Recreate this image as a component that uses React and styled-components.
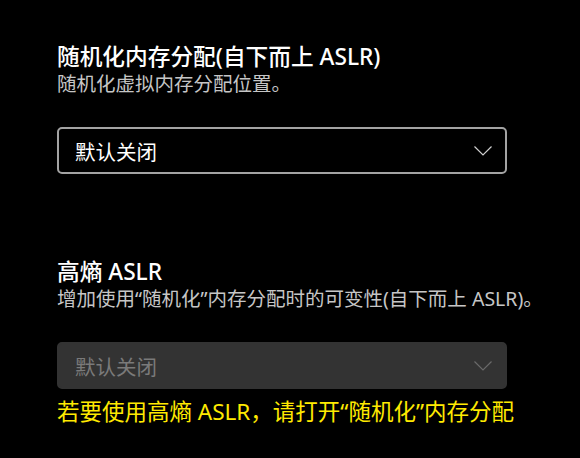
import React from "react";
import styled, { createGlobalStyle } from "styled-components";

const GlobalStyle = createGlobalStyle`
  html, body {
    margin: 0;
    padding: 0;
    background: #000;
  }
  body {
    font-family: "Noto Sans", "Noto Sans CJK SC", sans-serif;
    color: #fff;
  }
`;

const Page = styled.div`
  width: 580px;
  height: 458px;
  box-sizing: border-box;
  padding: 43px 0 0 57px;
  background: #000;
  overflow: hidden;
`;

const Section = styled.section`
  width: 450px;
  margin-bottom: ${(p) => p.gap || 0}px;
`;

const Title = styled.div`
  font-size: 22.7px;
  line-height: 28px;
  font-weight: 500;
  color: #fff;
  white-space: nowrap;
`;

const Desc = styled.div`
  font-size: 19.5px;
  line-height: 25px;
  color: #c6c6c6;
  white-space: nowrap;
`;

const Select = styled.div`
  margin-top: 31px;
  height: 47px;
  box-sizing: border-box;
  border-radius: 5px;
  display: flex;
  align-items: center;
  justify-content: space-between;
  padding: 0 13px 0 16px;
  font-size: 20.5px;
  border: 2px solid ${(p) => (p.disabled ? "#333333" : "#a3a3a3")};
  background: ${(p) => (p.disabled ? "#333333" : "#000")};
  color: ${(p) => (p.disabled ? "#7a7a7a" : "#fff")};
`;

const Warning = styled.div`
  margin-top: 8px;
  font-size: 22.5px;
  line-height: 30px;
  color: #ffea00;
  white-space: nowrap;
`;

function Chevron({ color }) {
  return (
    <svg width="18" height="10" viewBox="0 0 18 10" fill="none">
      <path d="M0.5 0.5 L9 9 L17.5 0.5" stroke={color} strokeWidth="1.2" />
    </svg>
  );
}

export default function App() {
  return (
    <>
      <GlobalStyle />
      <Page>
        <Section gap={84}>
          <Title>随机化内存分配(自下而上 ASLR)</Title>
          <Desc>随机化虚拟内存分配位置。</Desc>
          <Select>
            <span>默认关闭</span>
            <Chevron color="#cfcfcf" />
          </Select>
        </Section>
        <Section>
          <Title>高熵 ASLR</Title>
          <Desc>增加使用“随机化”内存分配时的可变性(自下而上 ASLR)。</Desc>
          <Select disabled>
            <span>默认关闭</span>
            <Chevron color="#6a6a6a" />
          </Select>
          <Warning>若要使用高熵 ASLR，请打开“随机化”内存分配</Warning>
        </Section>
      </Page>
    </>
  );
}
